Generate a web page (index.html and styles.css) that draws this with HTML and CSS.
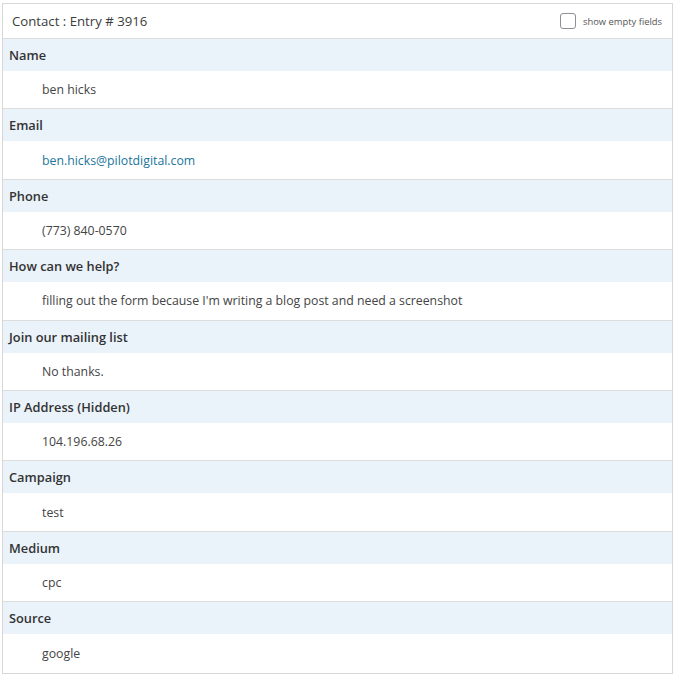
FILE: index.html
```html
<!DOCTYPE html>
<html>
<head>
<meta charset="utf-8">
<title>Contact : Entry # 3916</title>
<link rel="stylesheet" href="styles.css">
</head>
<body>
<div class="entry">
  <div class="entry-head">
    <span class="entry-title">Contact : Entry # 3916</span>
    <label class="empty-toggle"><span class="box"></span><span class="toggle-text">show empty fields</span></label>
  </div>
  <div class="field"><div class="f-label">Name</div><div class="f-value">ben hicks</div></div>
  <div class="field"><div class="f-label">Email</div><div class="f-value"><a class="link" href="#">ben.hicks@pilotdigital.com</a></div></div>
  <div class="field"><div class="f-label">Phone</div><div class="f-value">(773) 840-0570</div></div>
  <div class="field"><div class="f-label">How can we help?</div><div class="f-value">filling out the form because I'm writing a blog post and need a screenshot</div></div>
  <div class="field"><div class="f-label">Join our mailing list</div><div class="f-value">No thanks.</div></div>
  <div class="field"><div class="f-label">IP Address (Hidden)</div><div class="f-value">104.196.68.26</div></div>
  <div class="field"><div class="f-label">Campaign</div><div class="f-value">test</div></div>
  <div class="field"><div class="f-label">Medium</div><div class="f-value">cpc</div></div>
  <div class="field"><div class="f-label">Source</div><div class="f-value">google</div></div>
</div>
</body>
</html>
```
FILE: styles.css
```css
html, body {
  margin: 0;
  padding: 0;
  background: #ffffff;
}
body {
  font-family: "Open Sans", "Noto Sans", "Liberation Sans", sans-serif;
  color: #444;
  padding: 3px 1px 0 2px;
}
.entry {
  border: 1px solid #d7d7d7;
  background: #fff;
  width: 669px;
}
.entry-head {
  height: 34px;
  border-bottom: 1px solid #dcdcdc;
  display: flex;
  align-items: center;
  justify-content: space-between;
  padding: 0 10px 0 9px;
}
.entry-title {
  font-size: 13.2px;
  color: #3c3c3c;
}
.empty-toggle {
  display: flex;
  align-items: center;
  gap: 7px;
}
.box {
  width: 14px;
  height: 14px;
  border: 1px solid #8c8f94;
  border-radius: 3px;
  background: #fff;
}
.toggle-text {
  font-size: 9.4px;
  color: #555;
}
.field {
  border-bottom: 1px solid #dcdcdc;
  height: 70.4px;
  box-sizing: border-box;
  display: flex;
  flex-direction: column;
}
.field:last-child {
  border-bottom: 0;
}
.f-label {
  background: #eaf2fa;
  height: 32px;
  display: flex;
  align-items: center;
  padding-left: 6px;
  font-weight: 600;
  font-size: 12.8px;
  color: #333;
}
.f-value {
  flex: 1;
  display: flex;
  align-items: center;
  padding-left: 39px;
  font-size: 12.3px;
  color: #444;
}
.link {
  color: #21759b;
  text-decoration: none;
}
```
